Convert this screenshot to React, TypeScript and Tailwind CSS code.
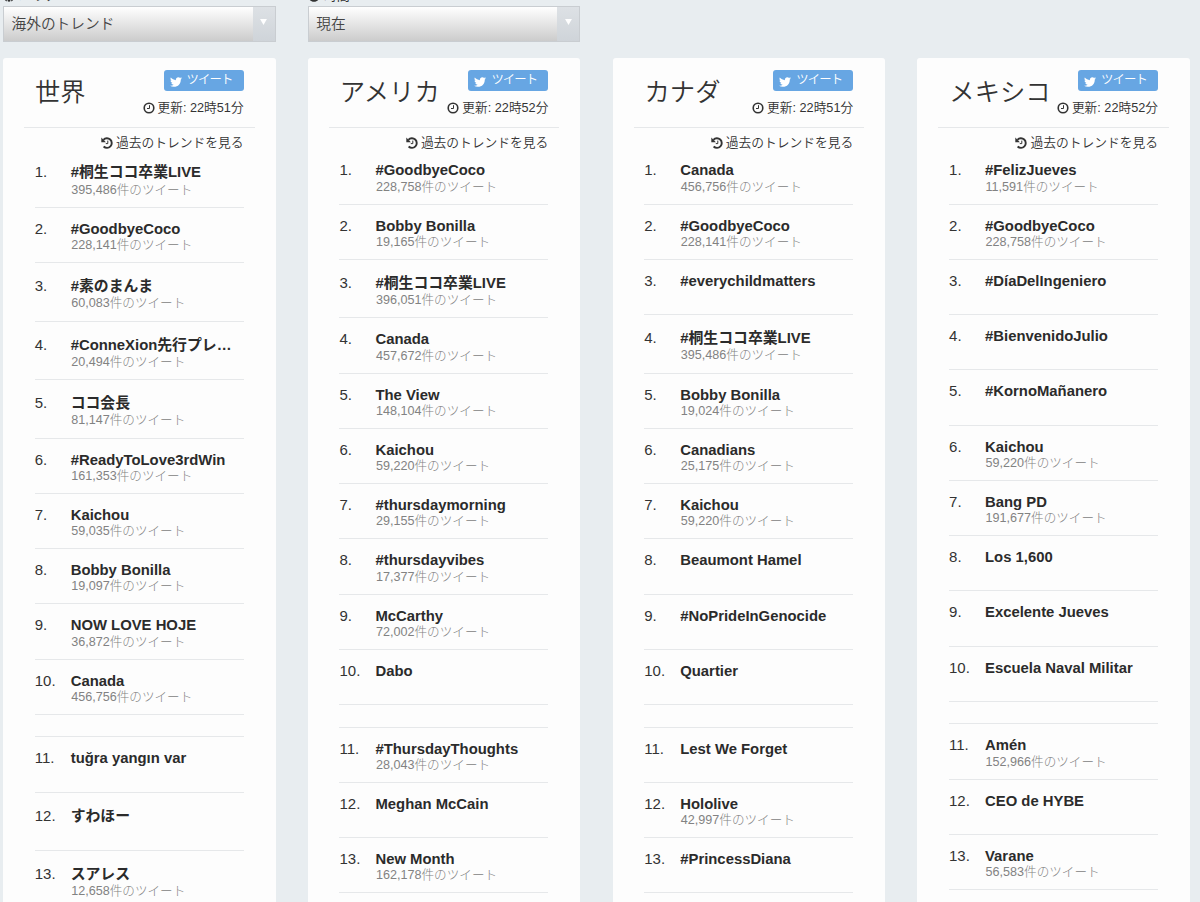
import { FaTwitter, FaGlobe, FaClock } from "react-icons/fa";

type Trend = {
  name: string;
  count?: string;
  // names with Japanese glyphs get a taller line
  tall?: boolean;
};

type Region = {
  title: string;
  time: string;
  trends: Trend[];
};

const regions: Region[] = [
  {
    title: "世界",
    time: "22時51分",
    trends: [
      { name: "#桐生ココ卒業LIVE", count: "395,486", tall: true },
      { name: "#GoodbyeCoco", count: "228,141" },
      { name: "#素のまんま", count: "60,083", tall: true },
      { name: "#ConneXion先行プレ…", count: "20,494", tall: true },
      { name: "ココ会長", count: "81,147", tall: true },
      { name: "#ReadyToLove3rdWin", count: "161,353" },
      { name: "Kaichou", count: "59,035" },
      { name: "Bobby Bonilla", count: "19,097" },
      { name: "NOW LOVE HOJE", count: "36,872" },
      { name: "Canada", count: "456,756" },
      { name: "tuğra yangın var" },
      { name: "すわほー", tall: true },
      { name: "スアレス", count: "12,658", tall: true },
    ],
  },
  {
    title: "アメリカ",
    time: "22時52分",
    trends: [
      { name: "#GoodbyeCoco", count: "228,758" },
      { name: "Bobby Bonilla", count: "19,165" },
      { name: "#桐生ココ卒業LIVE", count: "396,051", tall: true },
      { name: "Canada", count: "457,672" },
      { name: "The View", count: "148,104" },
      { name: "Kaichou", count: "59,220" },
      { name: "#thursdaymorning", count: "29,155" },
      { name: "#thursdayvibes", count: "17,377" },
      { name: "McCarthy", count: "72,002" },
      { name: "Dabo" },
      { name: "#ThursdayThoughts", count: "28,043" },
      { name: "Meghan McCain" },
      { name: "New Month", count: "162,178" },
    ],
  },
  {
    title: "カナダ",
    time: "22時51分",
    trends: [
      { name: "Canada", count: "456,756" },
      { name: "#GoodbyeCoco", count: "228,141" },
      { name: "#everychildmatters" },
      { name: "#桐生ココ卒業LIVE", count: "395,486", tall: true },
      { name: "Bobby Bonilla", count: "19,024" },
      { name: "Canadians", count: "25,175" },
      { name: "Kaichou", count: "59,220" },
      { name: "Beaumont Hamel" },
      { name: "#NoPrideInGenocide" },
      { name: "Quartier" },
      { name: "Lest We Forget" },
      { name: "Hololive", count: "42,997" },
      { name: "#PrincessDiana" },
    ],
  },
  {
    title: "メキシコ",
    time: "22時52分",
    trends: [
      { name: "#FelizJueves", count: "11,591" },
      { name: "#GoodbyeCoco", count: "228,758" },
      { name: "#DíaDelIngeniero" },
      { name: "#BienvenidoJulio" },
      { name: "#KornoMañanero" },
      { name: "Kaichou", count: "59,220" },
      { name: "Bang PD", count: "191,677" },
      { name: "Los 1,600" },
      { name: "Excelente Jueves" },
      { name: "Escuela Naval Militar" },
      { name: "Amén", count: "152,966" },
      { name: "CEO de HYBE" },
      { name: "Varane", count: "56,583" },
    ],
  },
];

const ClockIcon = () => (
  <svg className="size-3" viewBox="0 0 12 12" fill="none" stroke="currentColor">
    <circle cx="6" cy="6" r="4.8" strokeWidth="1.6" />
    <path d="M6.5 3.2v3.3H4" strokeWidth="1" />
  </svg>
);

const HistoryIcon = () => (
  <svg className="mb-[1.5px] size-3" viewBox="0 0 12 12" fill="none" stroke="currentColor">
    <path d="M2.4 2.8A4.8 4.8 0 1 1 2.6 9.5" strokeWidth="1.9" />
    <path d="M.3.6v4.6h4.6z" fill="currentColor" stroke="none" />
    <path d="M6.8 3.6v3H4.8" strokeWidth="1" />
  </svg>
);

const TrendRow = ({ trend, rank }: { trend: Trend; rank: number }) => (
  <li
    className={`flex shrink-0 border-b border-[#e6e8ea] ${
      trend.tall ? "h-[58.5px] pt-[13px]" : "h-[55.25px] pt-[11px]"
    }`}
  >
    <span className="w-9 shrink-0 text-[15px] leading-5 text-[#333]">{rank}.</span>
    <div className="w-[170px]">
      <div className="text-[14.85px] leading-5 font-bold whitespace-nowrap text-[#2b2b2b]">{trend.name}</div>
      {trend.count && (
        <div
          className={`pl-[0.5px] text-[12.6px] leading-[15px] font-light whitespace-nowrap text-[#828282] ${
            trend.tall ? "mt-[0.3px]" : "-mt-[0.8px]"
          }`}
        >
          {trend.count}件のツイート
        </div>
      )}
    </div>
  </li>
);

const RegionCard = ({ region }: { region: Region }) => (
  <section className="h-[1000px] w-[272.6px] shrink-0 rounded-[3px] bg-[#fdfdfd] px-[21px]">
    <div className="flex h-[70px] justify-between border-b border-[#e6e8ea] pr-[11px] pl-[11px]">
      <h2 className="pt-4 text-[25.3px] leading-9 font-[350] whitespace-nowrap text-[#333]">{region.title}</h2>
      <div className="flex flex-col items-end pt-3">
        <button className="flex h-[21px] w-20 items-center rounded-[3px] bg-[#67a6e3] pl-1.5 text-[12.4px] font-[350] text-white">
          <FaTwitter className="mt-0.5 mr-[5px] size-3" />
          <span className="tracking-[-0.9px]">ツイート</span>
        </button>
        <div className="mt-2 flex items-center gap-[3px] text-[12.7px] leading-[18px] font-[350] whitespace-nowrap text-[#333]">
          <ClockIcon />
          <span>更新: {region.time}</span>
        </div>
      </div>
    </div>
    <div className="flex h-[22px] items-end justify-end gap-[3px] pr-[11px] text-[12.75px] leading-[14px] font-[350] text-[#333]">
      <HistoryIcon />
      <span>過去のトレンドを見る</span>
    </div>
    <ol className="-mt-[0.7px] ml-[10.7px] mr-[11px] flex flex-col">
      {region.trends.slice(0, 10).map((trend, i) => (
        <TrendRow key={i} trend={trend} rank={i + 1} />
      ))}
    </ol>
    <ol className="mt-[21.5px] ml-[10.7px] mr-[11px] flex flex-col border-t border-[#e6e8ea]">
      {region.trends.slice(10).map((trend, i) => (
        <TrendRow key={i} trend={trend} rank={i + 11} />
      ))}
    </ol>
  </section>
);

const SelectBox = ({ value }: { value: string }) => (
  <div className="flex h-9 w-[272.6px] border border-[#c9cdd1] bg-linear-to-b from-white to-[#cccccc] text-[14.7px] font-[350] text-[#444]">
    <span className="flex flex-1 items-center pt-px pl-[7.5px]">{value}</span>
    <span className="flex w-[22px] justify-center bg-linear-to-b from-[#dde1e5] to-[#cfd4d9] pt-3">
      <svg className="h-1.5 w-[7px]" viewBox="0 0 8 7">
        <path d="M0 0h8L4 7z" fill="#fff" />
      </svg>
    </span>
  </div>
);

export default function App() {
  return (
    <div className="h-[902px] w-[1200px] overflow-hidden bg-[#e8edf0] pl-[3px] font-['Liberation_Sans','Noto_Sans_CJK_JP',sans-serif]">
      <div className="flex gap-[32.2px]">
        {[
          { icon: <FaGlobe className="size-3" />, label: "エリア", value: "海外のトレンド" },
          { icon: <FaClock className="size-3" />, label: "時間", value: "現在" },
        ].map((field) => (
          <div key={field.label}>
            <div className="flex h-1.5 items-end text-[13px] leading-4">
              <span className="flex items-center gap-1 pb-0.5 text-[#333]">
                {field.icon}
                {field.label}
              </span>
            </div>
            <SelectBox value={field.value} />
          </div>
        ))}
      </div>
      <main className="mt-4 flex gap-[32.2px]">
        {regions.map((region) => (
          <RegionCard key={region.title} region={region} />
        ))}
      </main>
    </div>
  );
}
